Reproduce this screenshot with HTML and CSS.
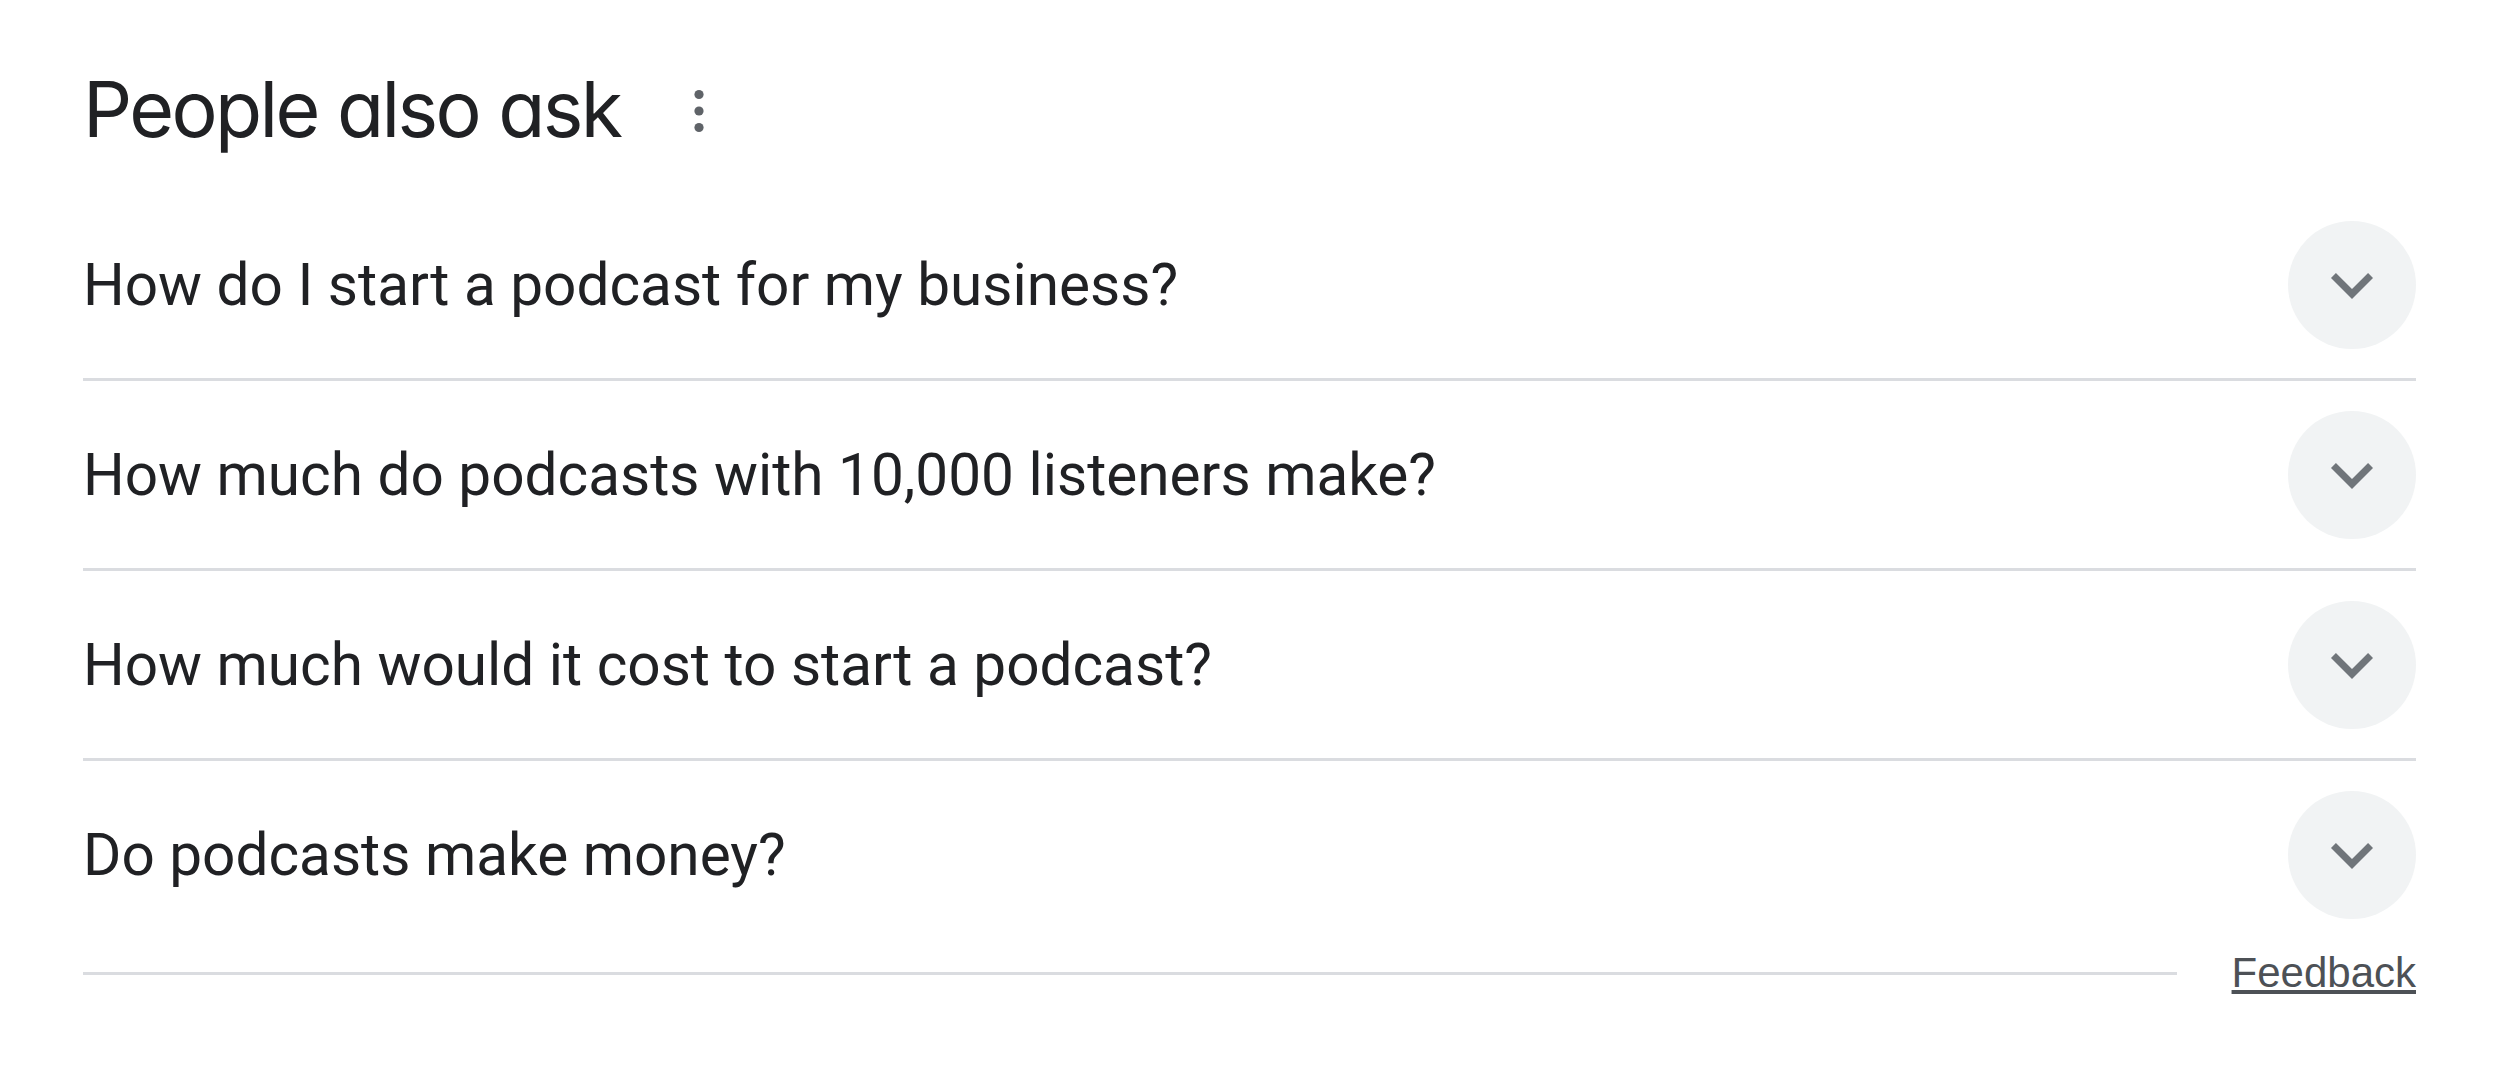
FILE: index.html
```html
<!DOCTYPE html>
<html lang="en">
<head>
<meta charset="utf-8">
<title>People also ask</title>
<link rel="stylesheet" href="styles.css">
</head>
<body>
<div class="paa">
  <div class="paa-header">
    <h2 class="paa-title">People also ask</h2>
    <svg class="kebab" width="20" height="50" viewBox="0 0 20 50" aria-hidden="true">
      <circle cx="10" cy="8.5" r="4.6"/>
      <circle cx="10" cy="25" r="4.6"/>
      <circle cx="10" cy="41.5" r="4.6"/>
    </svg>
  </div>
  <div class="paa-list">
    <div class="paa-row">
      <div class="paa-q">How do I start a podcast for my business?</div>
      <div class="paa-btn"><svg viewBox="0 0 24 24" width="84" height="84"><path d="M16.59 8.59L12 13.17 7.41 8.59 6 10l6 6 6-6z"/></svg></div>
    </div>
    <div class="paa-row">
      <div class="paa-q">How much do podcasts with 10,000 listeners make?</div>
      <div class="paa-btn"><svg viewBox="0 0 24 24" width="84" height="84"><path d="M16.59 8.59L12 13.17 7.41 8.59 6 10l6 6 6-6z"/></svg></div>
    </div>
    <div class="paa-row">
      <div class="paa-q">How much would it cost to start a podcast?</div>
      <div class="paa-btn"><svg viewBox="0 0 24 24" width="84" height="84"><path d="M16.59 8.59L12 13.17 7.41 8.59 6 10l6 6 6-6z"/></svg></div>
    </div>
    <div class="paa-row last">
      <div class="paa-q">Do podcasts make money?</div>
      <div class="paa-btn"><svg viewBox="0 0 24 24" width="84" height="84"><path d="M16.59 8.59L12 13.17 7.41 8.59 6 10l6 6 6-6z"/></svg></div>
    </div>
  </div>
  <div class="paa-footer">
    <div class="paa-rule"></div>
    <a class="feedback" href="#">Feedback</a>
  </div>
</div>
</body>
</html>
```
FILE: styles.css
```css
html, body {
  margin: 0;
  padding: 0;
  background: #ffffff;
}

.paa {
  padding: 0 84px 0 83px;
  color: #202124;
}

.paa-header {
  box-sizing: border-box;
  height: 191px;
  padding-top: 59px;
  display: flex;
  align-items: flex-start;
}

.paa-title {
  margin: 0;
  font-family: "Inter", "Roboto", sans-serif;
  font-feature-settings: "cv11" 1;
  font-weight: 400;
  font-size: 77px;
  line-height: 100px;
  letter-spacing: -2.6px;
  color: #202124;
}

.kebab {
  fill: #5f6368;
  margin-left: 68px;
  margin-top: 27px;
}

.paa-row {
  display: flex;
  align-items: center;
  height: 187px;
  border-bottom: 3px solid #dadce0;
}

.paa-row.last {
  border-bottom: none;
}

.paa-q {
  flex: 1;
  font-family: "Roboto", "Noto Sans", sans-serif;
  font-size: 58.5px;
  line-height: 80px;
  color: #202124;
}

.paa-btn {
  width: 128px;
  height: 128px;
  border-radius: 50%;
  background: #f1f3f4;
  display: flex;
  align-items: center;
  justify-content: center;
}

.paa-btn svg {
  fill: #70757a;
}

.paa-footer {
  display: flex;
  align-items: center;
  height: 50px;
}

.paa-rule {
  flex: 1;
  height: 3px;
  background: #dadce0;
}

.feedback {
  margin-left: 55px;
  font-family: "Liberation Sans", Arial, sans-serif;
  font-size: 42px;
  line-height: 48px;
  color: #4d5156;
  text-decoration: underline;
}
```
